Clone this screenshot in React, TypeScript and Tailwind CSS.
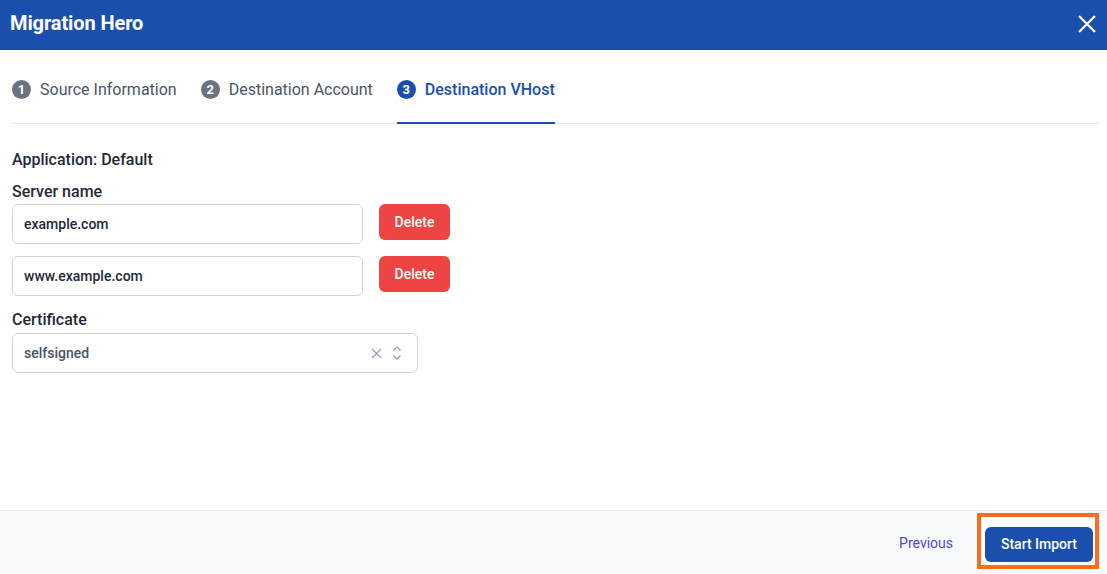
import React, { useState } from 'react';

const STEPS = ['Source Information', 'Destination Account', 'Destination VHost'];

export default function App() {
  const [names, setNames] = useState(['example.com', 'www.example.com']);
  const active = 2;

  return (
    <div className="h-[574px] w-[1107px] flex flex-col bg-white font-['Roboto',_'Liberation_Sans',_sans-serif] text-[#1f2937] overflow-hidden">
      {/* header */}
      <div className="h-[50px] shrink-0 bg-[#1a4fae] flex items-center justify-between pl-[10px] pr-[11px] pb-[4px]">
        <h1 className="text-[20px] font-bold text-white tracking-[-0.1px]">Migration Hero</h1>
        <svg width="18" height="18" viewBox="0 0 18 18" fill="none" stroke="white" strokeWidth="2.2" className="mt-[2px]">
          <path d="M1 1l16 16M17 1L1 17" />
        </svg>
      </div>

      <div className="flex-1 pl-3 pr-2">
        {/* steps */}
        <div className="flex border-b border-[#e5e7eb] h-[74px] items-stretch gap-6">
          {STEPS.map((s, i) => (
            <div
              key={s}
              className={`flex items-center gap-[9px] pt-[7px] -mb-px border-b-2 ${
                i === active ? 'border-[#1a4fae]' : 'border-transparent'
              }`}
            >
              <span
                className={`w-[19px] h-[19px] rounded-full flex items-center justify-center text-[13px] font-bold text-white ${
                  i === active ? 'bg-[#1a4fae]' : 'bg-[#6b7280]'
                }`}
              >
                {i + 1}
              </span>
              <span className={`text-[16px] ${i === active ? 'text-[#1a4fae] font-medium' : 'text-[#4b5563]'}`}>{s}</span>
            </div>
          ))}
        </div>

        <div className="pt-[26px]">
          <p className="text-[16px] font-medium text-[#1f2937] leading-[20px]">Application: Default</p>
          <p className="text-[16px] font-medium text-[#1f2937] leading-[20px] mt-[12px] mb-[2px]">Server name</p>
          <div className="flex flex-col gap-[12px]">
            {names.map((n, i) => (
              <div key={i} className="flex items-start gap-4">
                <input
                  value={n}
                  onChange={(e) => setNames(names.map((x, j) => (j === i ? e.target.value : x)))}
                  className="w-[351px] h-[40px] rounded-md border border-[#d1d5db] px-[11px] text-[14px] font-medium text-[#1f2937] outline-none"
                />
                <button
                  onClick={() => setNames(names.filter((_, j) => j !== i))}
                  className="w-[71px] h-[36px] rounded-md bg-[#ef4444] text-white text-[14px] font-medium"
                >
                  Delete
                </button>
              </div>
            ))}
          </div>
          <p className="text-[16px] font-medium text-[#1f2937] leading-[20px] mt-[14px] mb-[3px]">Certificate</p>
          <div className="w-[406px] h-[40px] rounded-md border border-[#d1d5db] flex items-center justify-between pl-[11px] pr-[15px]">
            <span className="text-[14px] font-medium text-[#475569]">selfsigned</span>
            <div className="flex items-center gap-[10px] text-[#94a3b8]">
              <svg width="11" height="11" viewBox="0 0 11 11" fill="none" stroke="currentColor" strokeWidth="1.4">
                <path d="M1 1l9 9M10 1l-9 9" />
              </svg>
              <svg width="10" height="16" viewBox="0 0 10 16" fill="none" stroke="currentColor" strokeWidth="1.4">
                <path d="M1.5 5.5L5 2l3.5 3.5M1.5 10.5L5 14l3.5-3.5" />
              </svg>
            </div>
          </div>
        </div>
      </div>

      {/* footer */}
      <div className="h-[64px] shrink-0 bg-[#f8fafc] border-t border-[#e2e8f0] flex items-start justify-end pr-[8px] pt-[2px] gap-[24px]">
        <button className="text-[14px] text-[#4f46e5] self-center">Previous</button>
        <div className="border-4 border-[#ff6b1a] bg-white pl-[4px] pr-[2px] pt-[10px] pb-[3px]">
          <button className="h-[35px] w-[108px] rounded-md bg-[#1a4fae] text-white text-[14px] font-medium">Start Import</button>
        </div>
      </div>
    </div>
  );
}
